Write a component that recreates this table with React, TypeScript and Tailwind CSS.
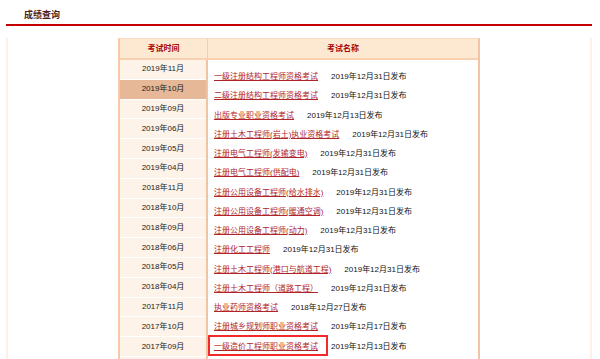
import React from "react";

const leftDates = [
  "2019年11月",
  "2019年10月",
  "2019年09月",
  "2019年06月",
  "2019年05月",
  "2019年04月",
  "2018年11月",
  "2018年10月",
  "2018年09月",
  "2018年06月",
  "2018年05月",
  "2018年04月",
  "2017年11月",
  "2017年10月",
  "2017年09月",
  "",
];

const exams: [string, string][] = [
  ["一级注册结构工程师资格考试", "2019年12月31日发布"],
  ["二级注册结构工程师资格考试", "2019年12月31日发布"],
  ["出版专业职业资格考试", "2019年12月13日发布"],
  ["注册土木工程师(岩土)执业资格考试", "2019年12月31日发布"],
  ["注册电气工程师(发输变电)", "2019年12月31日发布"],
  ["注册电气工程师(供配电)", "2019年12月31日发布"],
  ["注册公用设备工程师(给水排水)", "2019年12月31日发布"],
  ["注册公用设备工程师(暖通空调)", "2019年12月31日发布"],
  ["注册公用设备工程师(动力)", "2019年12月31日发布"],
  ["注册化工工程师", "2019年12月31日发布"],
  ["注册土木工程师(港口与航道工程)", "2019年12月31日发布"],
  ["注册土木工程师（道路工程）", "2019年12月31日发布"],
  ["执业药师资格考试", "2018年12月27日发布"],
  ["注册城乡规划师职业资格考试", "2019年12月17日发布"],
  ["一级造价工程师职业资格考试", "2019年12月13日发布"],
];

export default function App() {
  return (
    <div
      className="relative w-[600px] h-[359px] overflow-hidden bg-white"
      style={{ fontFamily: '"Liberation Sans", "Noto Sans CJK SC", sans-serif' }}
    >
      <div className="h-[24px] pl-[24px] pt-[9px] text-[9px] leading-[12px] font-bold text-[#4a1c1c]">
        成绩查询
      </div>
      <div className="ml-[6px] mr-[8px] border-t-2 border-[#c40000]" />
      <div className="ml-[6px] mr-[8px] h-[340px] border-x-2 border-[#fdf0e6]">
        <div className="ml-[110px] mt-[12px] w-[362px] border-t border-[#f9d9bf] border-r-2 border-r-[#f2c4a4] border-l-2 border-l-[#f5c9a8]">
          <div className="flex h-[21px] bg-[#fde9d2] border-b-2 border-[#f8d2b0] text-[8px] font-bold text-[#a5080c]">
            <div className="w-[88px] flex items-center justify-center border-r border-[#f3cdb0]">
              考试时间
            </div>
            <div className="flex-1 flex items-center justify-center">考试名称</div>
          </div>
          <div className="flex">
            <div className="w-[88px] border-r-2 border-[#f2c4a4]">
              {leftDates.map((d, i) => (
                <div
                  key={i}
                  className={`h-[19.8px] flex items-center justify-center border-b border-white text-[8px] text-[#222] ${
                    i === 1 ? "bg-[#e6b898]" : "bg-[#fdf3e8]"
                  }`}
                >
                  {d}
                </div>
              ))}
            </div>
            <div className="flex-1 pl-[6px] pt-[7px] text-[8px] leading-[19.25px]">
              {exams.map(([name, date]) => (
                <div key={name} className="whitespace-nowrap">
                  <span className="underline text-[#b0252a] decoration-[#b0252a]">{name}</span>
                  <span className="ml-[13px] text-[#111]">{date}</span>
                </div>
              ))}
            </div>
          </div>
        </div>
      </div>
      <div className="absolute left-[208px] top-[335px] w-[120px] h-[21px] border-2 border-[#f22a2a]" />
    </div>
  );
}
